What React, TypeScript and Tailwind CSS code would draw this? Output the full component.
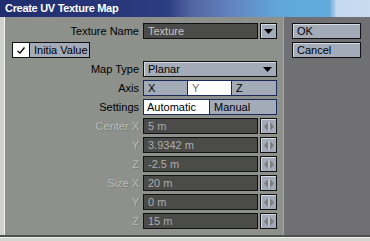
import React from "react";

const font = { fontFamily: '"Liberation Sans Narrow","Liberation Sans",Arial,sans-serif' };

function DownTri() {
  return (
    <svg width="9" height="5" viewBox="0 0 9 5">
      <polygon points="0,0 9,0 4.5,5" fill="#000" />
    </svg>
  );
}

function LR() {
  return (
    <svg width="10" height="9" viewBox="0 0 10 9">
      <polygon points="4,0 4,9 0,4.5" fill="#7c7e80" />
      <polygon points="6,0 6,9 10,4.5" fill="#7c7e80" />
      <line x1="5" y1="0" x2="5" y2="9" stroke="#d8dce2" strokeWidth="1" />
    </svg>
  );
}

function Label({ children, dim }: { children: React.ReactNode; dim?: boolean }) {
  return (
    <div
      className={
        "text-right text-[11px] leading-none " +
        (dim ? "text-[#b6bab6] [text-shadow:1px_1px_0_#7a7e7a]" : "text-black")
      }
    >
      {children}
    </div>
  );
}

function NumRow({ label, value }: { label: string; value: string }) {
  return (
    <div className="grid grid-cols-[134px_134px] gap-x-[4px] h-[16px] items-stretch">
      <div className="flex items-center justify-end">
        <Label dim>{label}</Label>
      </div>
      <div className="flex gap-[2px]">
        <div className="w-[115px] bg-[#4b4b49] border border-[#111] flex items-center pl-[4px] text-[11px] text-[#acaeac] leading-none">
          {value}
        </div>
        <div className="w-[17px] bg-[#a3abb8] border border-[#111] shadow-[inset_1px_1px_0_#d6dbe3] flex items-center justify-center">
          <LR />
        </div>
      </div>
    </div>
  );
}

export default function App() {
  return (
    <div className="w-[370px] h-[241px] flex flex-col bg-[#d4d4d0] overflow-hidden" style={font}>
      <div className="h-[17px] shrink-0 flex items-center pl-[5px] bg-[linear-gradient(to_right,#1f2d6e_0%,#2c3c80_45%,#5266a2_52%,#6282bd_62%,#60a6da_75%,#62aadc_89%,#c4d8ee_91%,#c8dbef_100%)]">
        <span
          className="text-white font-bold text-[11px] tracking-[-0.3px] leading-none"
          style={{ fontFamily: '"Liberation Sans",Arial,sans-serif' }}
        >
          Create UV Texture Map
        </span>
      </div>
      <div className="flex h-[218px] shrink-0">
        <div className="w-[5px] bg-[#d0d0cc] border-r border-[#f4f4f2]" />
        <div className="w-[278px] bg-[#8d908b] flex flex-col gap-[3px] pt-[6px]">
          <div className="grid grid-cols-[134px_134px] gap-x-[4px] h-[16px] items-stretch">
            <div className="flex items-center justify-end">
              <Label>Texture Name</Label>
            </div>
            <div className="flex gap-[2px]">
              <div className="w-[115px] bg-[#4b4b49] border border-[#111] flex items-center pl-[4px] text-[11px] text-[#c4c6c4] leading-none">
                Texture
              </div>
              <div className="w-[17px] bg-[#a3abb8] border border-[#111] shadow-[inset_1px_1px_0_#d6dbe3] flex items-center justify-center">
                <DownTri />
              </div>
            </div>
          </div>
          <div className="h-[16px] flex ml-[7px]">
            <div className="w-[18px] bg-white border border-[#111] flex items-center justify-center">
              <svg width="8" height="7" viewBox="0 0 8 7">
                <polyline points="0.5,4 3,6 7.5,0.5" fill="none" stroke="#000" strokeWidth="1.3" />
              </svg>
            </div>
            <div className="w-[60px] bg-[#a3abb8] border border-l-0 border-[#111] flex items-center pl-[4px] text-[11px] text-black leading-none">
              Initia Value
            </div>
          </div>
          <div className="grid grid-cols-[134px_134px] gap-x-[4px] h-[16px] items-stretch">
            <div className="flex items-center justify-end">
              <Label>Map Type</Label>
            </div>
            <div className="bg-[#a3abb8] border border-[#111] shadow-[inset_1px_1px_0_#d6dbe3] flex items-center justify-between pl-[4px] pr-[4px] text-[11px] text-black leading-none">
              <span>Planar</span>
              <DownTri />
            </div>
          </div>
          <div className="grid grid-cols-[134px_134px] gap-x-[4px] h-[16px] items-stretch">
            <div className="flex items-center justify-end">
              <Label>Axis</Label>
            </div>
            <div className="flex text-[11px] text-black leading-none">
              <div className="w-[45px] bg-[#a3abb8] border border-[#1c2a5a] flex items-center pl-[4px]">X</div>
              <div className="w-[44px] bg-white border border-l-0 border-[#1c2a5a] flex items-center pl-[4px] text-[#707070]">Y</div>
              <div className="w-[45px] bg-[#a3abb8] border border-l-0 border-[#1c2a5a] flex items-center pl-[4px]">Z</div>
            </div>
          </div>
          <div className="grid grid-cols-[134px_134px] gap-x-[4px] h-[16px] items-stretch">
            <div className="flex items-center justify-end">
              <Label>Settings</Label>
            </div>
            <div className="flex text-[11px] text-black leading-none">
              <div className="w-[67px] bg-white border border-[#1c2a5a] flex items-center pl-[3px]">Automatic</div>
              <div className="w-[67px] bg-[#a3abb8] border border-l-0 border-[#1c2a5a] flex items-center pl-[4px]">Manual</div>
            </div>
          </div>
          <NumRow label="Center X" value="5 m" />
          <NumRow label="Y" value="3.9342 m" />
          <NumRow label="Z" value="-2.5 m" />
          <NumRow label="Size X" value="20 m" />
          <NumRow label="Y" value="0 m" />
          <NumRow label="Z" value="15 m" />
        </div>
        <div className="flex-1 bg-[#6f6f74] border-l border-[#a6a8a4] flex flex-col gap-[3px] pt-[6px] pl-[8px]">
          <div className="w-[69px] h-[16px] bg-[#a3abb8] border border-[#111] shadow-[inset_1px_1px_0_#d6dbe3] flex items-center pl-[4px] text-[11px] text-black leading-none">
            OK
          </div>
          <div className="w-[69px] h-[16px] bg-[#a3abb8] border border-[#111] shadow-[inset_1px_1px_0_#d6dbe3] flex items-center pl-[4px] text-[11px] text-black leading-none">
            Cancel
          </div>
        </div>
      </div>
      <div className="h-[2px] shrink-0 bg-[#4e504c]" />
      <div className="flex-1 bg-[#d4d4d0] border-t border-[#f0f0ee]" />
    </div>
  );
}
